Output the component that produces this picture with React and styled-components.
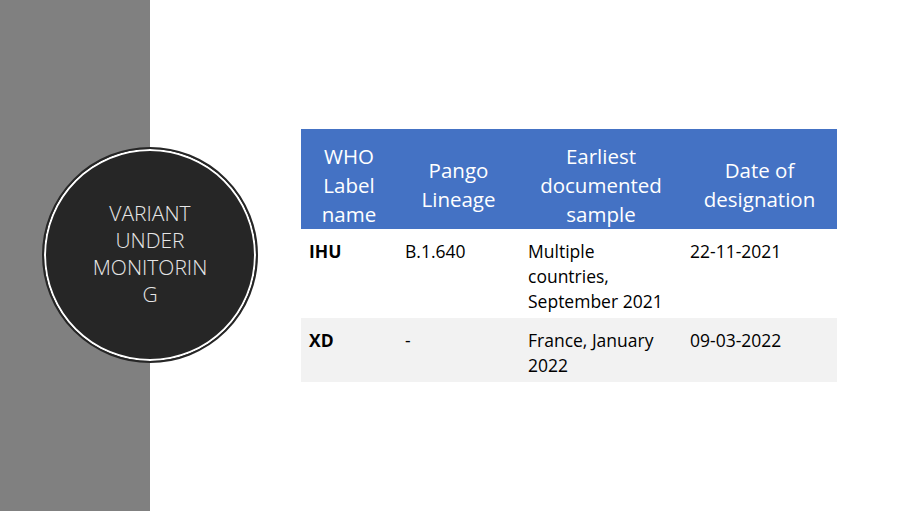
import React from "react";
import styled, { createGlobalStyle } from "styled-components";

const GlobalStyle = createGlobalStyle`
  html, body {
    margin: 0;
    padding: 0;
    background: #ffffff;
  }
  body {
    font-family: "Open Sans", "Noto Sans", "Liberation Sans", sans-serif;
  }
`;

const variants = [
  { label: "IHU", lineage: "B.1.640", sample: "Multiple countries, September 2021", date: "22-11-2021" },
  { label: "XD", lineage: "-", sample: "France, January 2022", date: "09-03-2022" },
];

const App = () => {
  return (
    <>
      <GlobalStyle />
      <Slide>
        <Sidebar />
        <Badge>
          <BadgeText>
            VARIANT
            <br />
            UNDER
            <br />
            MONITORIN
            <br />G
          </BadgeText>
        </Badge>
        <Content>
          <Table>
            <colgroup>
              <col style={{ width: 96 }} />
              <col style={{ width: 123 }} />
              <col style={{ width: 162 }} />
              <col style={{ width: 155 }} />
            </colgroup>
            <thead>
              <tr>
                <Th>WHO Label name</Th>
                <Th>Pango Lineage</Th>
                <Th>Earliest documented sample</Th>
                <Th>Date of designation</Th>
              </tr>
            </thead>
            <tbody>
              {variants.map((v, i) => (
                <Row key={v.label} $shaded={i % 2 === 1}>
                  <Td $bold>{v.label}</Td>
                  <Td>{v.lineage}</Td>
                  <Td>{v.sample}</Td>
                  <Td>{v.date}</Td>
                </Row>
              ))}
            </tbody>
          </Table>
        </Content>
      </Slide>
    </>
  );
};

const Slide = styled.div`
  position: relative;
  display: flex;
  width: 909px;
  height: 511px;
  overflow: hidden;
  background: #ffffff;
`;

const Sidebar = styled.div`
  flex: 0 0 150px;
  background: #808080;
`;

const Badge = styled.div`
  position: absolute;
  left: 42px;
  top: 147px;
  width: 216px;
  height: 216px;
  box-sizing: border-box;
  border-radius: 50%;
  border: 2px solid #262626;
  background: #262626;
  box-shadow: inset 0 0 0 2px #ffffff;
  display: flex;
  align-items: center;
  justify-content: center;
`;

const BadgeText = styled.div`
  color: #e6e6e6;
  font-size: 21px;
  font-weight: 300;
  line-height: 27px;
  text-align: center;
  margin-top: -2px;
`;

const Content = styled.div`
  flex: 1;
  display: flex;
  align-items: center;
  padding-left: 151px;
`;

const Table = styled.table`
  width: 536px;
  border-collapse: collapse;
  table-layout: fixed;
`;

const Th = styled.th`
  background: #4472c4;
  color: #ffffff;
  font-weight: 400;
  font-size: 20.5px;
  line-height: 29px;
  text-align: center;
  vertical-align: middle;
  height: 100px;
  padding: 12px 4px 0;
  box-sizing: border-box;
`;

const Row = styled.tr`
  background: ${(p) => (p.$shaded ? "#f2f2f2" : "#ffffff")};
`;

const Td = styled.td`
  color: #000000;
  font-size: 17.5px;
  line-height: 25px;
  font-weight: ${(p) => (p.$bold ? 700 : 400)};
  text-align: left;
  vertical-align: top;
  padding: 10px 8px 4px;
`;

export default App;
